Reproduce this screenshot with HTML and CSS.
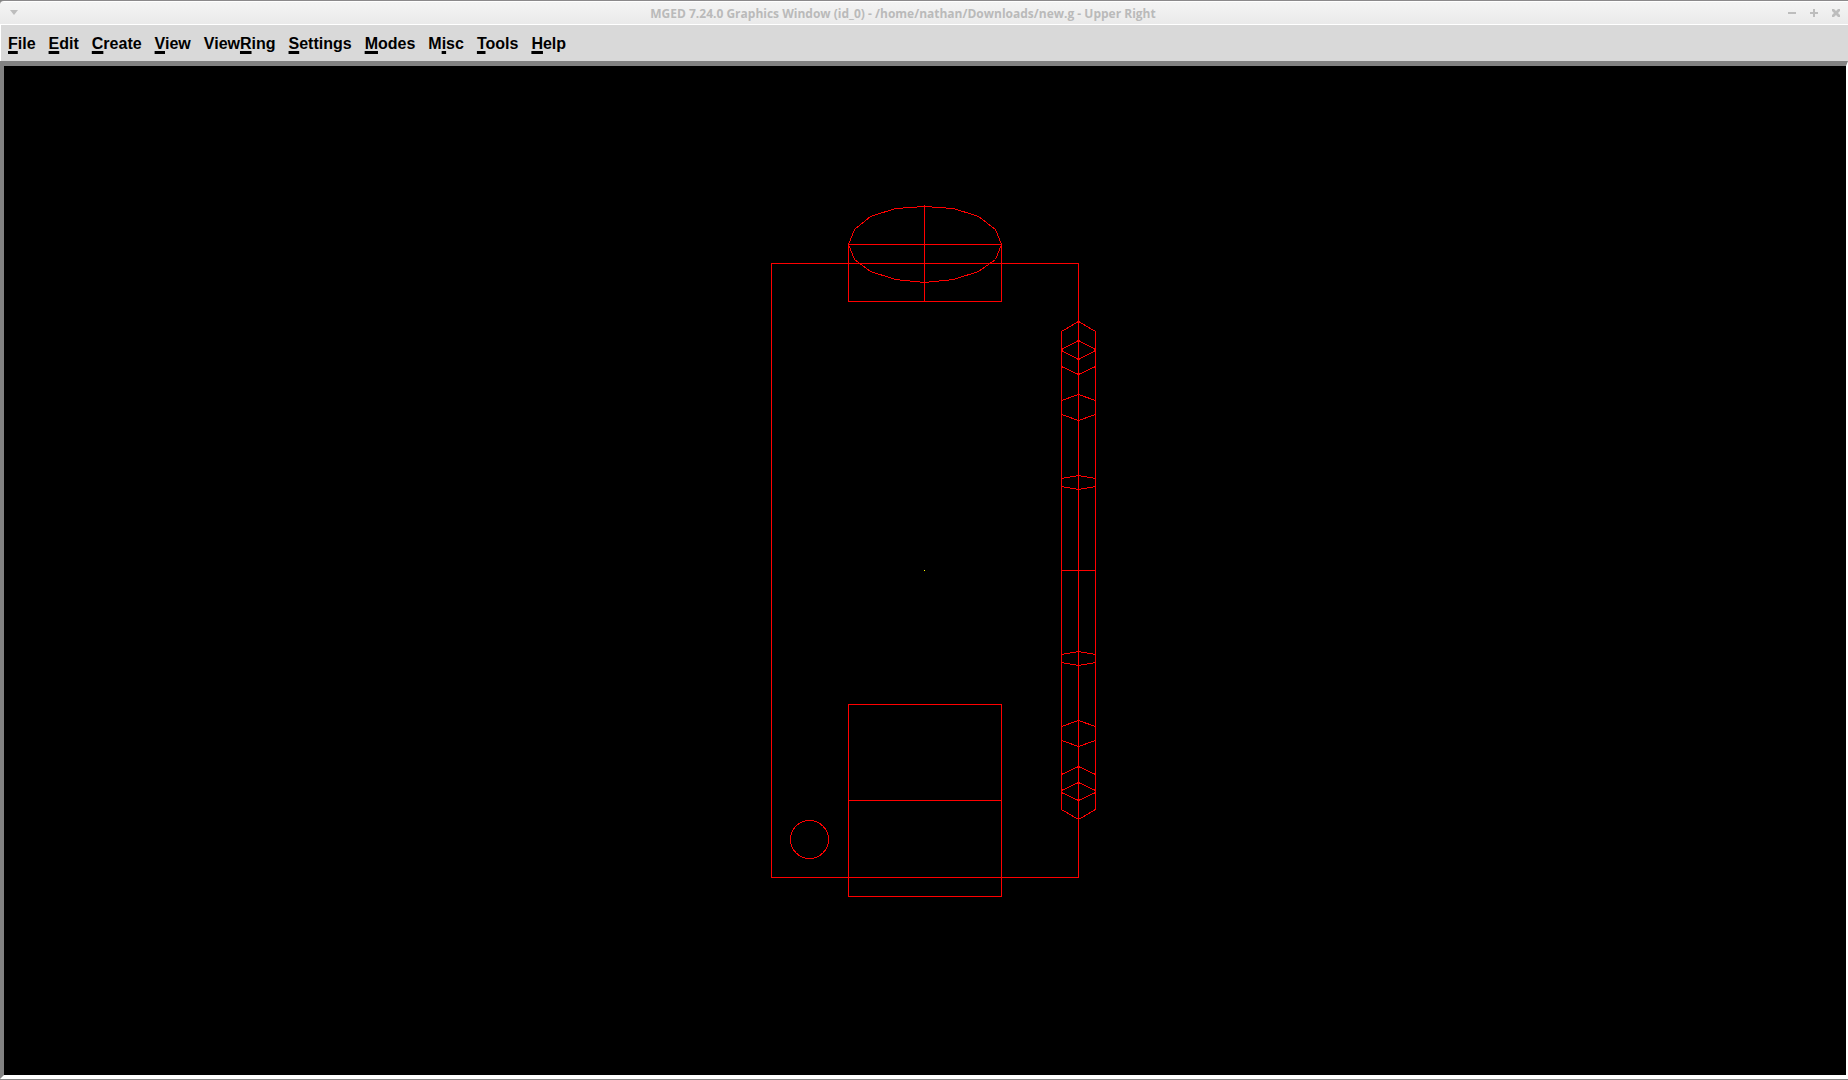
FILE: index.html
```html
<!DOCTYPE html>
<html lang="en">
<head>
<meta charset="utf-8">
<title>MGED 7.24.0 Graphics Window</title>
<link rel="stylesheet" href="styles.css">
</head>
<body>
<div class="window">
  <header class="titlebar">
    <button class="control" aria-label="Window menu"><svg width="10" height="10" viewBox="0 0 10 10"><path d="M1 2h8L5 7z"/></svg></button>
    <h1 class="title">MGED 7.24.0 Graphics Window (id_0) - /home/nathan/Downloads/new.g - Upper Right</h1>
    <div class="controls">
      <button class="control" aria-label="Minimize"><svg width="10" height="10" viewBox="0 0 10 10"><path d="M1 4h8v2H1z"/></svg></button>
      <button class="control" aria-label="Maximize"><svg width="10" height="10" viewBox="0 0 10 10"><path d="M1 4h3V1h2v3h3v2H6v3H4V6H1z"/></svg></button>
      <button class="control" aria-label="Close"><svg width="10" height="10" viewBox="0 0 10 10"><path d="M1 1h2l2 2 2-2h2v2L7 5l2 2v2H7L5 7 3 9H1V7l2-2-2-2z"/></svg></button>
    </div>
  </header>
  <nav class="menubar">
    <button class="menu"><u>F</u>ile</button>
    <button class="menu"><u>E</u>dit</button>
    <button class="menu"><u>C</u>reate</button>
    <button class="menu"><u>V</u>iew</button>
    <button class="menu">View<u>R</u>ing</button>
    <button class="menu"><u>S</u>ettings</button>
    <button class="menu"><u>M</u>odes</button>
    <button class="menu">M<u>i</u>sc</button>
    <button class="menu"><u>T</u>ools</button>
    <button class="menu"><u>H</u>elp</button>
  </nav>
  <main class="viewport">
    <svg class="scene" viewBox="4 66 1842 1009" role="img" aria-label="Wireframe view">
      <g class="wire">
        <!-- body -->
        <path d="M771.5 263.5H1078.5V877.5H771.5z"/>
        <!-- upper cylinder -->
        <path d="M848.5 243V301.5H1001.5V243M848.5 244.5H1001.5M924.5 205V301"/>
        <path d="M924.5 206.5L953.5 208.5L978.5 216.5L995.5 229.5L1001.5 244.5L995.5 259.5L978.5 271.5L953.5 279.5L924.5 282.5L895.5 279.5L870.5 271.5L854.5 259.5L848.5 244.5L854.5 229.5L870.5 216.5L895.5 208.5z"/>
        <!-- lower box -->
        <path d="M848.5 704.5H1001.5V896.5H848.5zM848.5 800.5H1001.5"/>
        <circle cx="809.5" cy="839.5" r="19"/>
        <!-- side ring -->
        <path d="M1061.5 809.5V331.5L1078.5 321.5L1095.5 331.5V809.5L1078.5 819.5z"/>
        <path d="M1061.5 349.5L1078.5 340.5L1095.5 349.5M1061.5 350.5L1078.5 359.5L1095.5 350.5M1061.5 366.5L1078.5 374.5L1095.5 366.5"/>
        <path d="M1061.5 400.5L1078.5 394.5L1095.5 400.5M1061.5 414.5L1078.5 420.5L1095.5 414.5"/>
        <path d="M1061.5 478.5L1078.5 475.5L1095.5 478.5M1061.5 486.5L1078.5 489.5L1095.5 486.5M1061.5 570.5H1095.5"/>
        <path d="M1061.5 654.5L1078.5 651.5L1095.5 654.5M1061.5 662.5L1078.5 665.5L1095.5 662.5"/>
        <path d="M1061.5 726.5L1078.5 720.5L1095.5 726.5M1061.5 740.5L1078.5 746.5L1095.5 740.5"/>
        <path d="M1061.5 774.5L1078.5 766.5L1095.5 774.5M1061.5 790.5L1078.5 782.5L1095.5 790.5M1061.5 792.5L1078.5 800.5L1095.5 792.5"/>
      </g>
      <rect class="center" x="924" y="570" width="1" height="1"/>
    </svg>
  </main>
</div>
</body>
</html>
```
FILE: styles.css
```css
* { box-sizing: border-box; }

body {
  margin: 0;
  background: #828282;
}

.window {
  display: flex;
  flex-direction: column;
  height: 100vh;
  border-bottom: 1px solid #828282;
}

.titlebar {
  display: flex;
  align-items: center;
  height: 25px;
  padding: 0 7px 0 9px;
  border-top: 1px solid #8b898b;
  border-bottom: 1px solid #fff;
  border-top-left-radius: 4px;
  background: linear-gradient(#fff 1px, #f4f4f4 1px, #eaeaea);
}

.title {
  flex: 1;
  margin: 0;
  padding-top: 2px;
  text-align: center;
  font: bold 12px/20px "Open Sans", sans-serif;
  color: #bababa;
}

.controls {
  display: flex;
  gap: 12px;
}

.control {
  display: flex;
  padding: 0;
  border: 0;
  background: none;
}

.control svg { fill: #bdbdbd; }

.menubar {
  display: flex;
  gap: 1px;
  height: 36px;
  padding: 2px 1px 0;
  border-left: 1px solid #fff;
  background: #d9d9d9;
}

.menu {
  padding: 0 6px;
  border: 0;
  background: none;
  color: #000;
  font: bold 16px/34px "Liberation Sans", Arial, sans-serif;
}

.menu u {
  text-decoration-thickness: 3px;
  text-underline-offset: 2px;
  text-decoration-skip-ink: none;
}

.viewport {
  flex: 1;
  min-height: 0;
  border: solid #828282;
  border-width: 5px 2px 4px 4px;
  border-right-color: #fff;
  border-bottom-color: #fff;
  background: #000;
}

.scene {
  display: block;
  width: 100%;
  height: 100%;
}

.wire {
  fill: none;
  stroke: #f00;
  stroke-width: 1px;
  shape-rendering: crispEdges;
}

.center { fill: #ff0; }
```
